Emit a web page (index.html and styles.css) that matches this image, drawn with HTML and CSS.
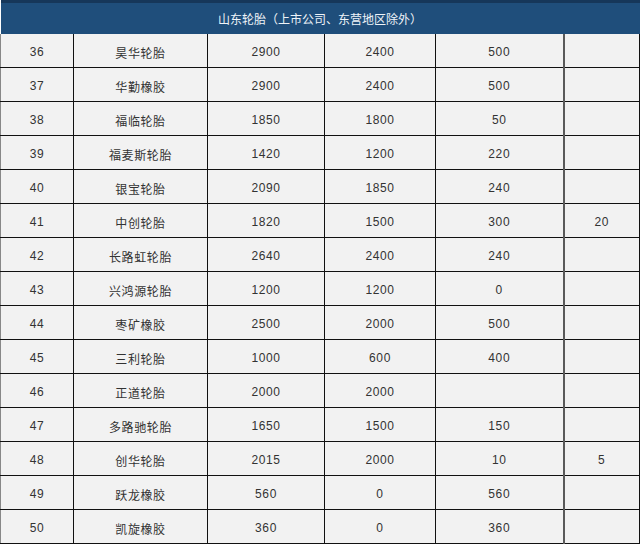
FILE: index.html
```html
<!DOCTYPE html>
<html lang="zh">
<head>
<meta charset="utf-8">
<title>山东轮胎</title>
<link rel="stylesheet" href="styles.css">
</head>
<body>
<table class="grid">
<colgroup>
<col class="c1"><col class="c2"><col class="c3"><col class="c4"><col class="c5"><col class="c6">
</colgroup>
<thead>
<tr><th colspan="6" class="title">山东轮胎（上市公司、东营地区除外）</th></tr>
</thead>
<tbody>
<tr><td>36</td><td>昊华轮胎</td><td>2900</td><td>2400</td><td class="c5b">500</td><td></td></tr>
<tr><td>37</td><td>华勤橡胶</td><td>2900</td><td>2400</td><td class="c5b">500</td><td></td></tr>
<tr><td>38</td><td>福临轮胎</td><td>1850</td><td>1800</td><td class="c5b">50</td><td></td></tr>
<tr><td>39</td><td>福麦斯轮胎</td><td>1420</td><td>1200</td><td class="c5b">220</td><td></td></tr>
<tr><td>40</td><td>银宝轮胎</td><td>2090</td><td>1850</td><td class="c5b">240</td><td></td></tr>
<tr><td>41</td><td>中创轮胎</td><td>1820</td><td>1500</td><td class="c5b">300</td><td>20</td></tr>
<tr><td>42</td><td>长路虹轮胎</td><td>2640</td><td>2400</td><td class="c5b">240</td><td></td></tr>
<tr><td>43</td><td>兴鸿源轮胎</td><td>1200</td><td>1200</td><td class="c5b">0</td><td></td></tr>
<tr><td>44</td><td>枣矿橡胶</td><td>2500</td><td>2000</td><td class="c5b">500</td><td></td></tr>
<tr><td>45</td><td>三利轮胎</td><td>1000</td><td>600</td><td class="c5b">400</td><td></td></tr>
<tr><td>46</td><td>正道轮胎</td><td>2000</td><td>2000</td><td class="c5b"></td><td></td></tr>
<tr><td>47</td><td>多路驰轮胎</td><td>1650</td><td>1500</td><td class="c5b">150</td><td></td></tr>
<tr><td>48</td><td>创华轮胎</td><td>2015</td><td>2000</td><td class="c5b">10</td><td>5</td></tr>
<tr><td>49</td><td>跃龙橡胶</td><td>560</td><td>0</td><td class="c5b">560</td><td></td></tr>
<tr><td>50</td><td>凯旋橡胶</td><td>360</td><td>0</td><td class="c5b">360</td><td></td></tr>
</tbody>
</table>
</body>
</html>
```
FILE: styles.css
```css
html, body {
  margin: 0;
  padding: 0;
  background: #ffffff;
}
.grid {
  border-collapse: collapse;
  table-layout: fixed;
  width: 639px;
  font-family: "Liberation Sans", "Noto Sans CJK SC", sans-serif;
  font-size: 12px;
  color: #333333;
}
.c1 { width: 73px; }
.c2 { width: 134px; }
.c3 { width: 117px; }
.c4 { width: 111px; }
.c5 { width: 128px; }
.c6 { width: 76px; }
.title {
  height: 31px;
  padding: 0;
  background: #1f4e7b;
  border-top: 3px solid #16375a;
  color: #eef3f8;
  font-weight: normal;
  font-size: 12px;
  text-align: center;
  vertical-align: middle;
}
td {
  height: 30px;
  padding: 3px 0 0 0;
  background: #f2f2f2;
  border: 1px solid #111111;
  text-align: center;
  vertical-align: middle;
  letter-spacing: 0.6px;
}
td:first-child {
  border-left: 1px solid #888888;
}
td.c5b {
  border-right: 2px solid #5a5a5a;
}
tbody tr:first-child td {
  border-top: none;
}
```
